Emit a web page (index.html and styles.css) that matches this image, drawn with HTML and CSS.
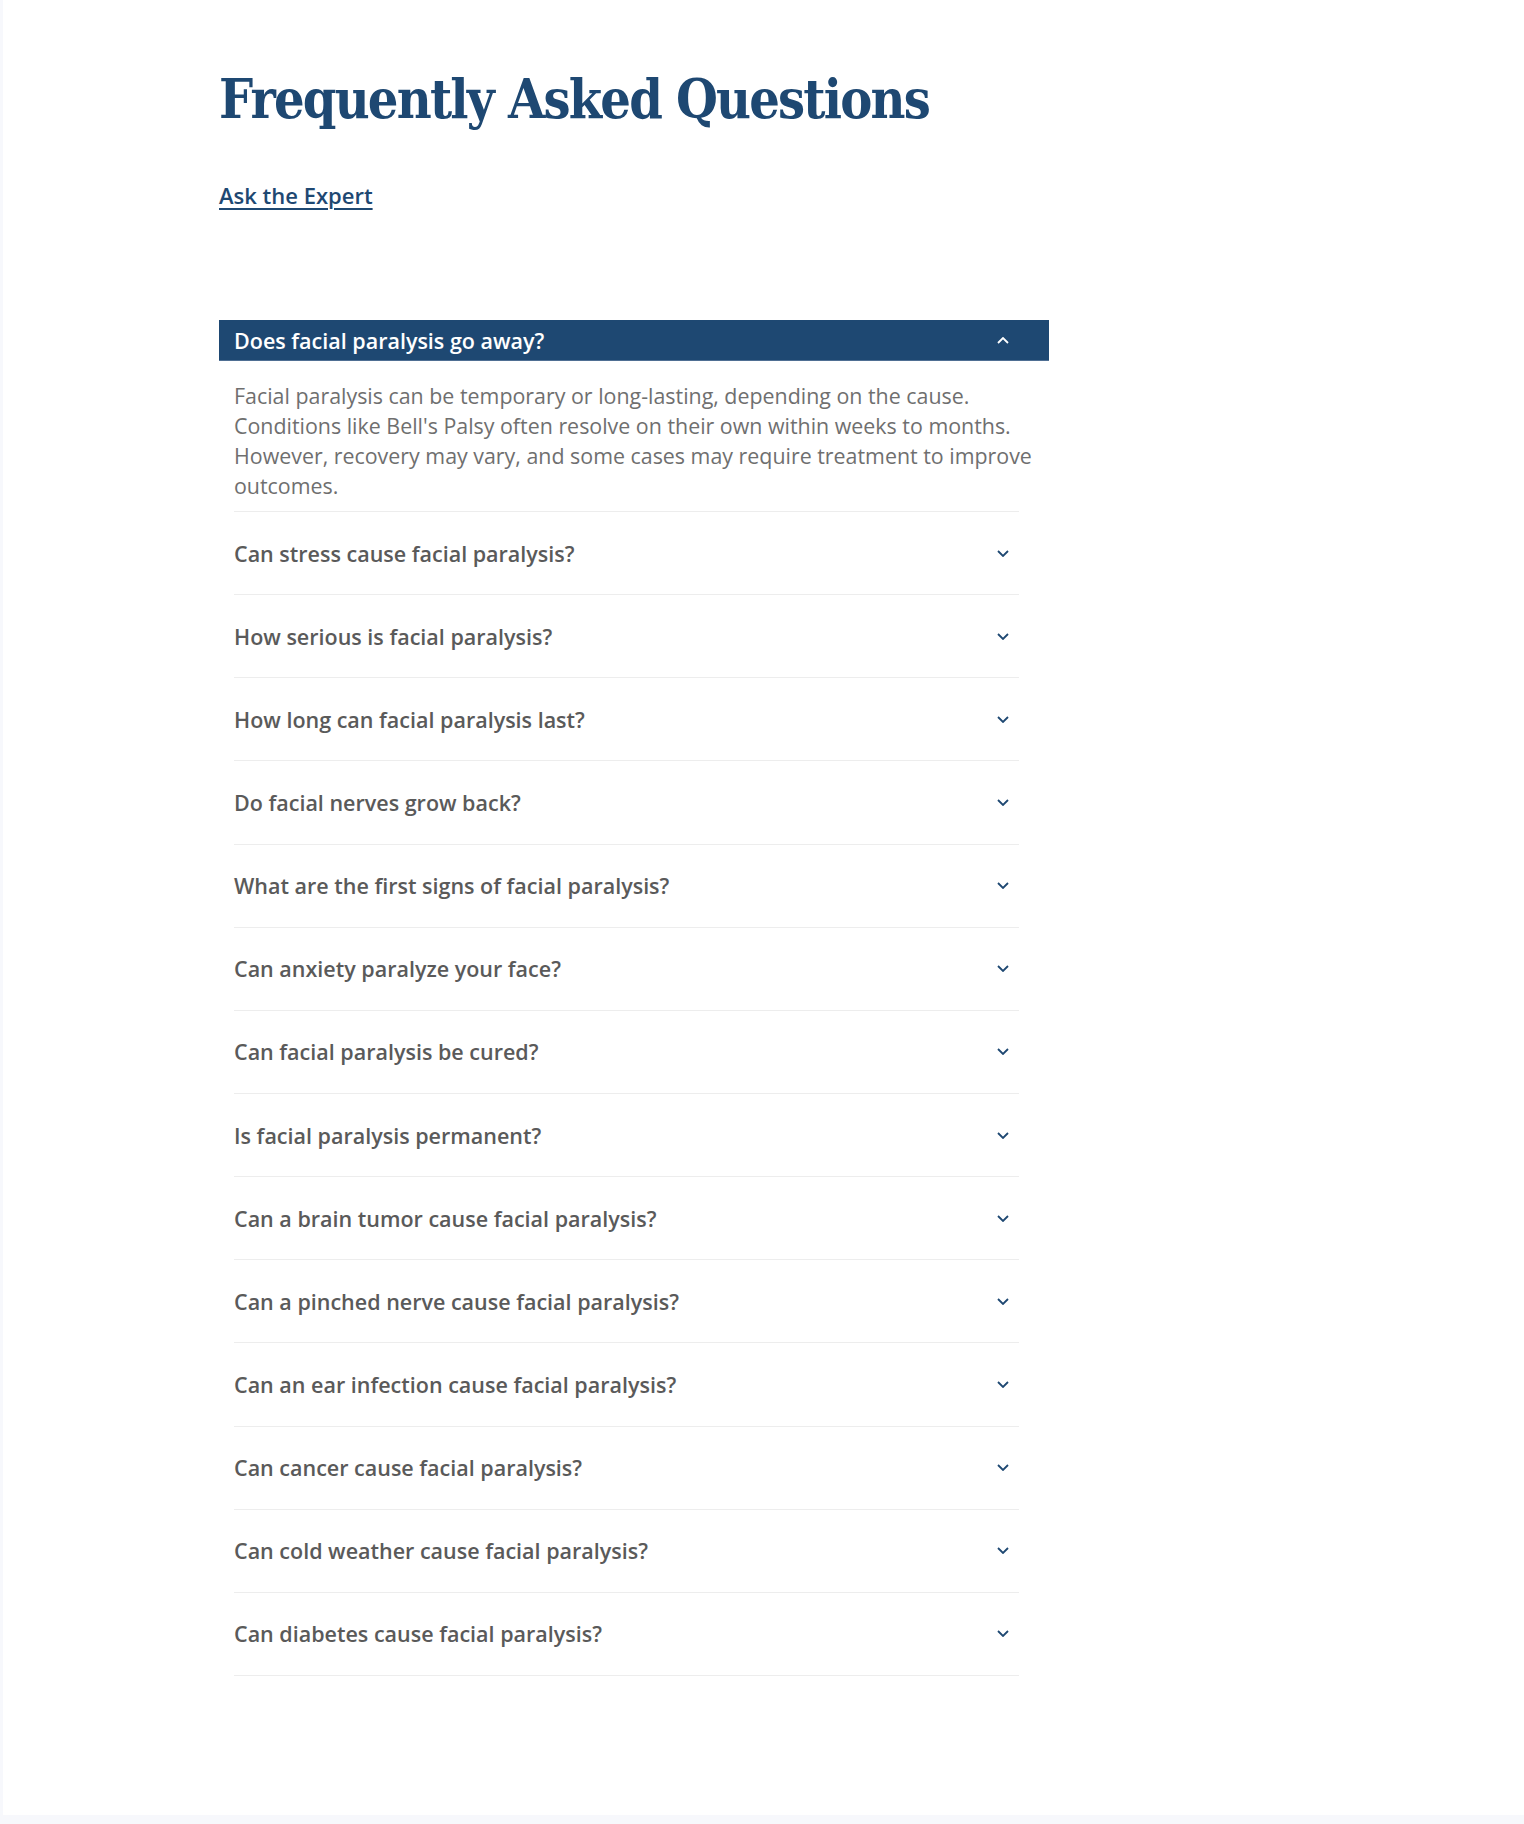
FILE: index.html
```html
<!DOCTYPE html>
<html lang="en">
<head>
<meta charset="utf-8">
<title>Frequently Asked Questions</title>
<link rel="stylesheet" href="styles.css">
</head>
<body>
<main class="page">
  <section class="faq">
    <h1 class="faq-title">Frequently Asked Questions</h1>
    <a class="faq-link" href="#">Ask the Expert</a>

    <div class="accordion">
      <div class="acc-open">
        <div class="acc-head">
          <span>Does facial paralysis go away?</span>
          <svg class="chev" width="12" height="7" viewBox="0 0 12 7"><polyline points="1,6 6,1 11,6" fill="none" stroke="#ffffff" stroke-width="1.8"/></svg>
        </div>
        <div class="acc-body">
          <p>Facial paralysis can be temporary or long-lasting, depending on the cause. Conditions like Bell's Palsy often resolve on their own within weeks to months. However, recovery may vary, and some cases may require treatment to improve outcomes.</p>
        </div>
      </div>

      <div class="acc-item"><span>Can stress cause facial paralysis?</span><svg class="chev" width="12" height="7" viewBox="0 0 12 7"><polyline points="1,1 6,6 11,1" fill="none" stroke="#1e4872" stroke-width="1.8"/></svg></div>
      <div class="acc-item"><span>How serious is facial paralysis?</span><svg class="chev" width="12" height="7" viewBox="0 0 12 7"><polyline points="1,1 6,6 11,1" fill="none" stroke="#1e4872" stroke-width="1.8"/></svg></div>
      <div class="acc-item"><span>How long can facial paralysis last?</span><svg class="chev" width="12" height="7" viewBox="0 0 12 7"><polyline points="1,1 6,6 11,1" fill="none" stroke="#1e4872" stroke-width="1.8"/></svg></div>
      <div class="acc-item"><span>Do facial nerves grow back?</span><svg class="chev" width="12" height="7" viewBox="0 0 12 7"><polyline points="1,1 6,6 11,1" fill="none" stroke="#1e4872" stroke-width="1.8"/></svg></div>
      <div class="acc-item"><span>What are the first signs of facial paralysis?</span><svg class="chev" width="12" height="7" viewBox="0 0 12 7"><polyline points="1,1 6,6 11,1" fill="none" stroke="#1e4872" stroke-width="1.8"/></svg></div>
      <div class="acc-item"><span>Can anxiety paralyze your face?</span><svg class="chev" width="12" height="7" viewBox="0 0 12 7"><polyline points="1,1 6,6 11,1" fill="none" stroke="#1e4872" stroke-width="1.8"/></svg></div>
      <div class="acc-item"><span>Can facial paralysis be cured?</span><svg class="chev" width="12" height="7" viewBox="0 0 12 7"><polyline points="1,1 6,6 11,1" fill="none" stroke="#1e4872" stroke-width="1.8"/></svg></div>
      <div class="acc-item"><span>Is facial paralysis permanent?</span><svg class="chev" width="12" height="7" viewBox="0 0 12 7"><polyline points="1,1 6,6 11,1" fill="none" stroke="#1e4872" stroke-width="1.8"/></svg></div>
      <div class="acc-item"><span>Can a brain tumor cause facial paralysis?</span><svg class="chev" width="12" height="7" viewBox="0 0 12 7"><polyline points="1,1 6,6 11,1" fill="none" stroke="#1e4872" stroke-width="1.8"/></svg></div>
      <div class="acc-item"><span>Can a pinched nerve cause facial paralysis?</span><svg class="chev" width="12" height="7" viewBox="0 0 12 7"><polyline points="1,1 6,6 11,1" fill="none" stroke="#1e4872" stroke-width="1.8"/></svg></div>
      <div class="acc-item"><span>Can an ear infection cause facial paralysis?</span><svg class="chev" width="12" height="7" viewBox="0 0 12 7"><polyline points="1,1 6,6 11,1" fill="none" stroke="#1e4872" stroke-width="1.8"/></svg></div>
      <div class="acc-item"><span>Can cancer cause facial paralysis?</span><svg class="chev" width="12" height="7" viewBox="0 0 12 7"><polyline points="1,1 6,6 11,1" fill="none" stroke="#1e4872" stroke-width="1.8"/></svg></div>
      <div class="acc-item"><span>Can cold weather cause facial paralysis?</span><svg class="chev" width="12" height="7" viewBox="0 0 12 7"><polyline points="1,1 6,6 11,1" fill="none" stroke="#1e4872" stroke-width="1.8"/></svg></div>
      <div class="acc-item"><span>Can diabetes cause facial paralysis?</span><svg class="chev" width="12" height="7" viewBox="0 0 12 7"><polyline points="1,1 6,6 11,1" fill="none" stroke="#1e4872" stroke-width="1.8"/></svg></div>
    </div>
  </section>
</main>
</body>
</html>
```

FILE: styles.css
```css
html, body {
  margin: 0;
  padding: 0;
}
body {
  background: #f7f8fc;
  font-family: "Open Sans", "Noto Sans", sans-serif;
}
.page {
  background: #ffffff;
  margin-left: 3px;
  height: 1815px;
  box-sizing: border-box;
  padding: 62px 0 0 216px;
}
.faq {
  width: 830px;
}
.faq-title {
  margin: 0;
  font-family: "DejaVu Serif Condensed", "Liberation Serif", serif;
  font-weight: 700;
  font-size: 53.5px;
  line-height: 76px;
  color: #1e4872;
  letter-spacing: -1.8px;
}
.faq-link {
  display: inline-block;
  margin-top: 42px;
  font-size: 22px;
  font-weight: 600;
  line-height: 30px;
  color: #1e4872;
  text-decoration: underline;
  text-underline-offset: 4px;
  text-decoration-thickness: 1.5px;
}
.accordion {
  margin-top: 110px;
}
.acc-head {
  height: 41px;
  background: #1e4872;
  border-bottom: 1px solid #4f6f93;
  box-sizing: border-box;
  display: flex;
  align-items: center;
  justify-content: space-between;
  padding: 0 40px 0 15px;
  color: #ffffff;
  font-size: 21.5px;
  font-weight: 600;
}
.acc-body {
  margin: 0 30px 0 15px;
  border-bottom: 1px solid #ededed;
  padding: 20px 0 10px;
}
.acc-body p {
  margin: 0 -20px 0 0;
  font-size: 21.4px;
  line-height: 30px;
  color: #6f6f6f;
}
.acc-item {
  margin: 0 30px 0 15px;
  height: 83.15px;
  box-sizing: border-box;
  border-bottom: 1px solid #ededed;
  display: flex;
  align-items: center;
  justify-content: space-between;
  padding-right: 10px;
  font-size: 21.5px;
  font-weight: 600;
  color: #5a5a5a;
}
.chev {
  display: block;
  flex: none;
}
```
